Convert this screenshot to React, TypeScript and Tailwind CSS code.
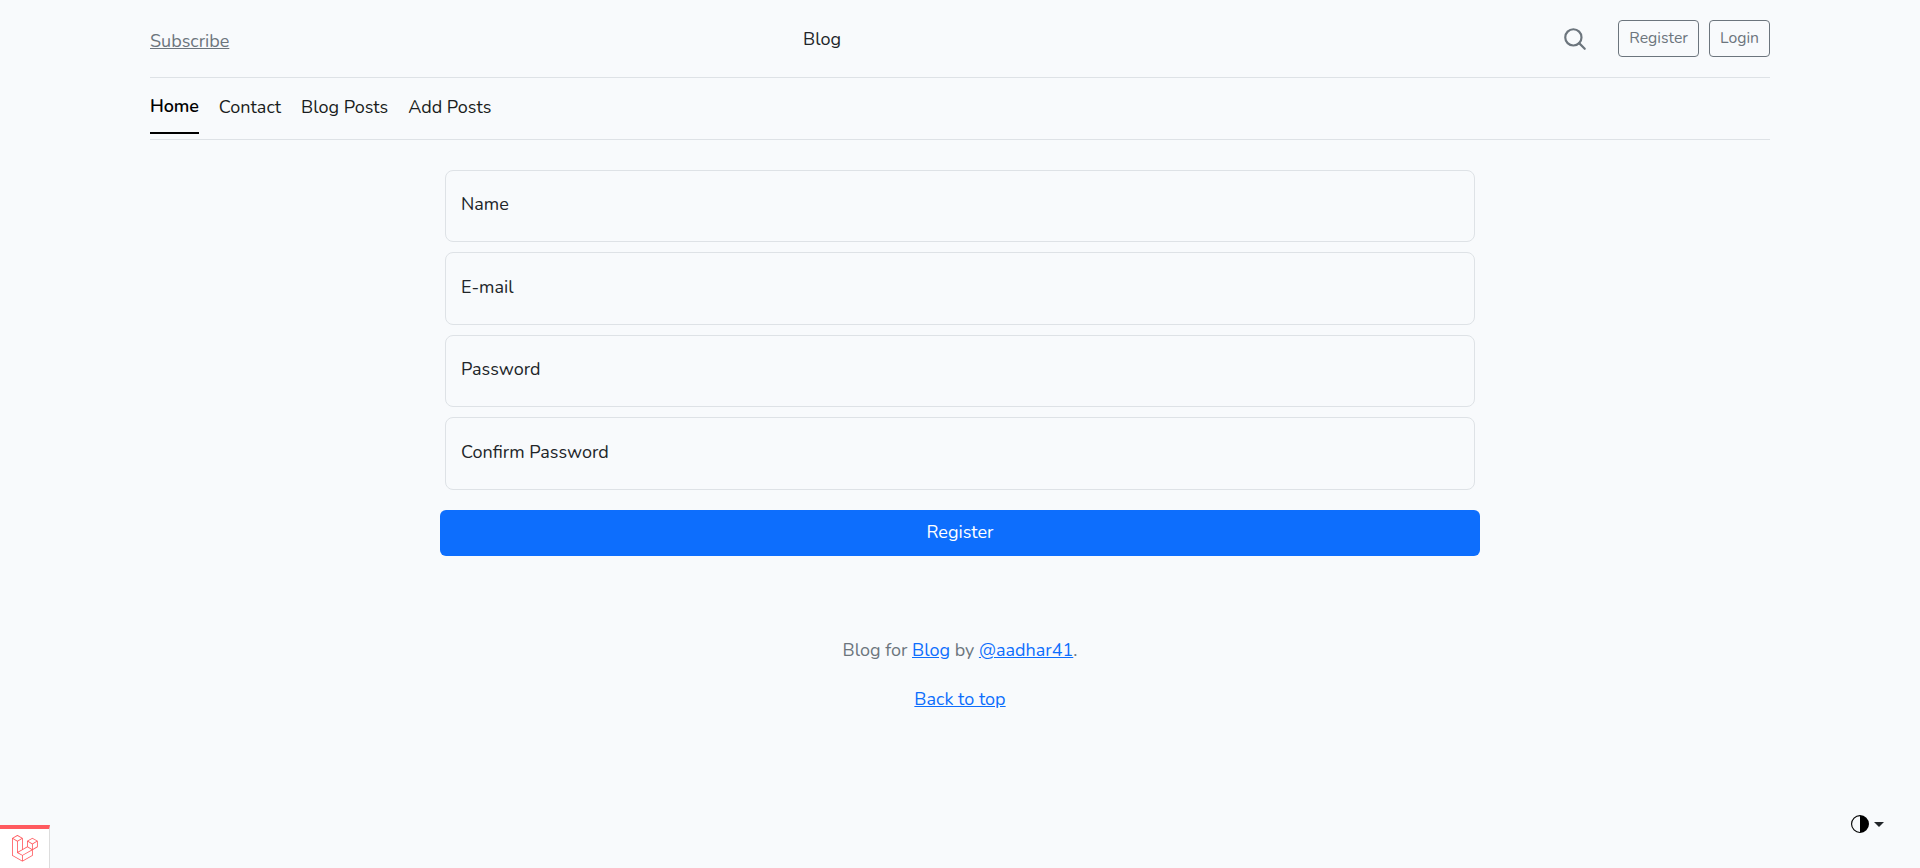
const font = { fontFamily: '"Nunito", "Lato", "Noto Sans", sans-serif' };

const navLinks = ["Contact", "Blog Posts", "Add Posts"];
const fields = ["Name", "E-mail", "Password", "Confirm Password"];

function SearchIcon() {
  return (
    <svg width="26" height="26" viewBox="0 0 24 24" fill="none" stroke="#6c757d" strokeWidth="2" strokeLinecap="round" strokeLinejoin="round" className="block">
      <circle cx="10.5" cy="10.5" r="7.5" />
      <path d="M21 21l-5.2-5.2" />
    </svg>
  );
}

function LaravelLogo() {
  return (
    <svg width="26" height="27" viewBox="0 0 50 52" fill="#ff5a5f">
      <path d="M49.626 11.564a.809.809 0 0 1 .028.209v10.972a.8.8 0 0 1-.402.694l-9.209 5.302V39.25c0 .286-.152.55-.4.694L20.42 51.01c-.044.025-.092.041-.14.058-.018.006-.035.017-.054.022a.805.805 0 0 1-.41 0c-.022-.006-.042-.018-.063-.026-.044-.016-.09-.03-.132-.054L.402 39.944A.801.801 0 0 1 0 39.25V6.334c0-.072.01-.142.028-.21.006-.023.02-.044.028-.067.015-.042.029-.085.051-.124.015-.026.037-.047.055-.071.023-.032.044-.065.071-.093.023-.023.053-.04.079-.06.029-.024.055-.05.088-.069h.001l9.61-5.533a.802.802 0 0 1 .8 0l9.61 5.533h.002c.032.02.059.045.088.068.026.02.055.038.078.06.028.029.048.062.072.094.017.024.04.045.054.071.023.04.036.082.052.124.008.023.022.044.028.068a.809.809 0 0 1 .028.209v20.559l8.008-4.611v-10.51c0-.07.01-.141.028-.208.007-.024.02-.045.028-.068.016-.042.03-.085.052-.124.015-.026.037-.047.054-.071.024-.032.044-.065.072-.093.023-.023.052-.04.078-.06.03-.024.056-.05.088-.069h.001l9.611-5.533a.801.801 0 0 1 .8 0l9.61 5.533c.034.02.06.045.09.068.025.02.054.038.077.06.028.029.048.062.072.094.018.024.04.045.054.071.023.039.036.082.052.124.009.023.022.044.028.068zm-1.574 10.718v-9.124l-3.363 1.936-4.646 2.675v9.124l8.01-4.611zm-9.61 16.505v-9.13l-4.57 2.61-13.05 7.448v9.216l17.62-10.144zM1.602 7.719v31.068L19.22 48.93v-9.214l-9.204-5.209-.003-.002-.004-.002c-.031-.018-.057-.044-.086-.066-.025-.02-.054-.036-.076-.058l-.002-.003c-.026-.025-.044-.056-.066-.084-.02-.027-.044-.05-.06-.078l-.001-.003c-.018-.03-.029-.066-.042-.1-.013-.03-.03-.058-.038-.09v-.001c-.01-.038-.012-.078-.016-.117-.004-.03-.012-.06-.012-.09v-.002-21.481L4.965 9.654 1.602 7.72zm8.81-5.994L2.405 6.334l8.005 4.609 8.006-4.61-8.006-4.608zm4.164 28.764l4.645-2.674V7.719l-3.363 1.936-4.646 2.675v20.096l3.364-1.937zM39.243 7.164l-8.006 4.609 8.006 4.609 8.005-4.61-8.005-4.608zm-.801 10.605l-4.646-2.675-3.363-1.936v9.124l4.645 2.674 3.364 1.937v-9.124zM20.02 38.33l11.743-6.704 5.87-3.35-8-4.606-9.211 5.303-8.395 4.833 7.993 4.524z" />
    </svg>
  );
}

export default function App() {
  return (
    <div className="min-h-[868px] bg-[#f8fafc] text-[18px] text-[#212529]" style={font}>
      <div className="mx-auto w-[1620px]">
        <header className="flex h-[78px] items-center border-b border-[#dee2e6]">
          <div className="w-[653px] pt-[6px]">
            <a href="#" className="text-[#6c757d] underline">Subscribe</a>
          </div>
          <a href="#" className="pt-[2px] text-[#212529]">Blog</a>
          <div className="flex flex-1 items-center justify-end">
            <a href="#" className="mr-[30px]"><SearchIcon /></a>
            <a href="#" className="mr-[10px] rounded-[4px] border border-[#6c757d] px-[10px] py-[5px] text-[15.75px] leading-[25px] text-[#6c757d]">Register</a>
            <a href="#" className="rounded-[4px] border border-[#6c757d] px-[10px] py-[5px] text-[15.75px] leading-[25px] text-[#6c757d]">Login</a>
          </div>
        </header>

        <nav className="flex h-[62px] gap-[20px] border-b border-[#dee2e6]">
          <a href="#" className="flex h-[56px] items-center border-b-2 border-black pt-[2px] font-semibold tracking-[-0.1px] text-black">Home</a>
          {navLinks.map((link) => (
            <a key={link} href="#" className="flex h-[56px] items-center pt-[2px] text-[#1a1d20]">{link}</a>
          ))}
        </nav>

        <form className="mx-auto mt-[29.5px] flex w-[1040px] flex-col">
          <div className="flex flex-col gap-[10px] px-[5px]">
            {fields.map((field) => (
              <input
                key={field}
                placeholder={field}
                className="h-[72.5px] w-full rounded-[8px] border border-[#dee2e6] bg-transparent px-[15px] pb-[3px] text-[18px] outline-none placeholder:text-[#212529]"
              />
            ))}
          </div>
          <button type="button" className="mt-[20.5px] h-[46px] w-full rounded-[6px] bg-[#0d6efd] pb-[1px] text-[18px] text-white">Register</button>
        </form>

        <footer className="mt-[81px] text-center text-[#6c757d]">
          <p className="leading-[27px]">
            Blog for <a href="#" className="text-[#0d6efd] underline">Blog</a> by <a href="#" className="text-[#0d6efd] underline">@aadhar41</a>.
          </p>
          <p className="mt-[22px] leading-[27px]">
            <a href="#" className="text-[#0d6efd] underline">Back to top</a>
          </p>
        </footer>
      </div>

      <div className="fixed bottom-0 left-0 flex h-[43px] w-[50px] items-center justify-center border-t-4 border-r border-t-[#ff5a5f] border-r-[#dddddd] bg-white">
        <LaravelLogo />
      </div>

      <div className="fixed bottom-[35px] right-[36px] flex items-center gap-[5px]">
        <svg width="18" height="18" viewBox="0 0 16 16" fill="#000" className="block">
          <path d="M8 15A7 7 0 1 1 8 1v14zm0 1A8 8 0 1 0 8 0a8 8 0 0 0 0 16z" />
        </svg>
        <span className="h-0 w-0 border-x-[5px] border-t-[5px] border-x-transparent border-t-[#212529]" />
      </div>
    </div>
  );
}
